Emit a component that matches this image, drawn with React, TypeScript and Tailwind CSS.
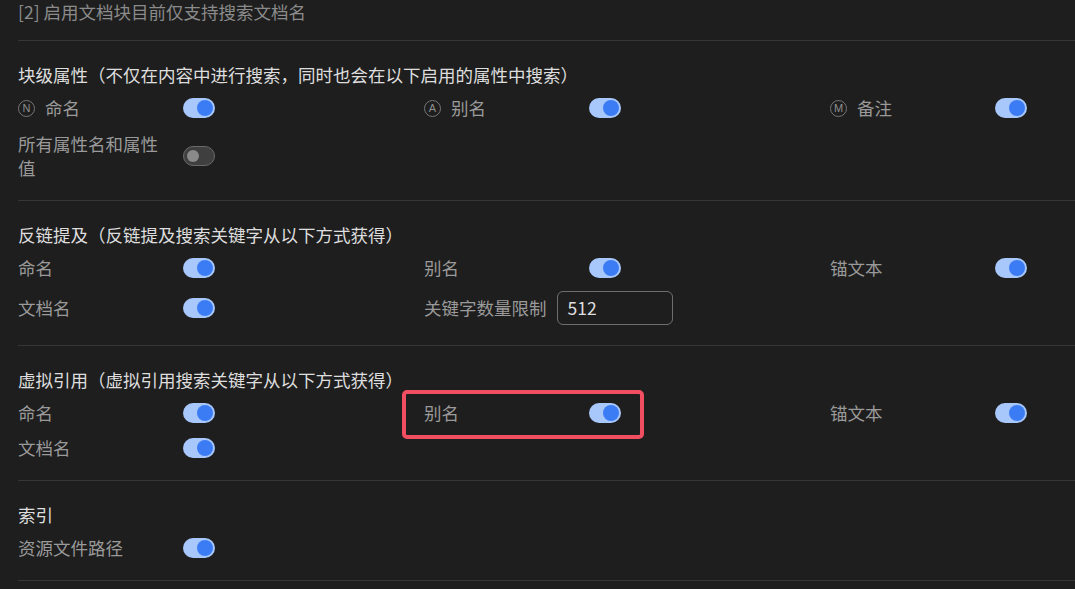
import React from 'react'

type Item = {
  label: string
  icon?: string
  on?: boolean
  input?: string
  wrap?: boolean
}

const Toggle: React.FC<{ on?: boolean }> = ({ on }) =>
  on ? (
    <div className="w-8 h-5 rounded-full bg-[#a8c7fa] flex items-center justify-end px-[2px] shrink-0">
      <div className="w-4 h-4 rounded-full bg-[#3b7cf5]" />
    </div>
  ) : (
    <div className="w-8 h-5 rounded-full bg-[#3f3f3f] border border-[#6a6a6a] flex items-center pl-[3px] shrink-0">
      <div className="w-3 h-3 rounded-full bg-[#8a8a8a]" />
    </div>
  )

const Circled: React.FC<{ ch: string }> = ({ ch }) => (
  <span className="w-[17px] h-[17px] rounded-full border border-[#767676] text-[#8e8e8e] text-[11px] leading-none flex items-center justify-center shrink-0 font-['Liberation_Sans',sans-serif]">
    {ch}
  </span>
)

const Row: React.FC<{ item: Item }> = ({ item }) => {
  if (item.input !== undefined) {
    return (
      <div className="flex items-center gap-[10px]">
        <span className="text-[#9a9a9a] leading-6">{item.label}</span>
        <div className="w-[116px] h-[34px] border border-[#6e6e6e] rounded-[6px] px-[10px] flex items-center text-[#dedede]">
          {item.input}
        </div>
      </div>
    )
  }
  return (
    <div className={`flex items-center ${item.wrap ? 'pt-px' : ''}`}>
      <div className="w-[165px] flex items-center gap-[10px] pr-5">
        {item.icon && <Circled ch={item.icon} />}
        <span className="text-[#9a9a9a] leading-6">{item.label}</span>
      </div>
      <Toggle on={item.on} />
    </div>
  )
}

const Section: React.FC<{ title: string; items: Item[] }> = ({ title, items }) => (
  <div className="border-t border-[#363636] pt-[22px] pb-5">
    <h3 className="text-[#dedede] leading-6 whitespace-nowrap">{title}</h3>
    <div className="mt-[9px] grid grid-cols-[406px_406px_406px] gap-y-[11px]">
      {items.map((it, i) => (
        <Row key={i} item={it} />
      ))}
    </div>
  </div>
)

const App: React.FC = () => {
  return (
    <div className="relative w-[1075px] h-[589px] overflow-hidden bg-[#1e1e1e] text-[17.5px] font-['Noto_Sans_CJK_SC',sans-serif]">
      <div className="pl-[18px] w-[1300px]">
        <div className="pb-4 leading-6 text-[#8b8b8b]">
          [2] 启用文档块目前仅支持搜索文档名
        </div>

        <Section
          title="块级属性（不仅在内容中进行搜索，同时也会在以下启用的属性中搜索）"
          items={[
            { label: '命名', icon: 'N', on: true },
            { label: '别名', icon: 'A', on: true },
            { label: '备注', icon: 'M', on: true },
            { label: '所有属性名和属性值', on: false, wrap: true },
          ]}
        />

        <Section
          title="反链提及（反链提及搜索关键字从以下方式获得）"
          items={[
            { label: '命名', on: true },
            { label: '别名', on: true },
            { label: '锚文本', on: true },
            { label: '文档名', on: true },
            { label: '关键字数量限制', input: '512' },
          ]}
        />

        <Section
          title="虚拟引用（虚拟引用搜索关键字从以下方式获得）"
          items={[
            { label: '命名', on: true },
            { label: '别名', on: true },
            { label: '锚文本', on: true },
            { label: '文档名', on: true },
          ]}
        />

        <Section title="索引" items={[{ label: '资源文件路径', on: true }]} />

        <div className="border-t border-[#363636] h-4" />
      </div>

      {/* highlight annotation */}
      <div className="absolute left-[402px] top-[390px] w-[242px] h-[49px] border-4 border-[#f24e62] rounded-[5px]" />
    </div>
  )
}

export default App
